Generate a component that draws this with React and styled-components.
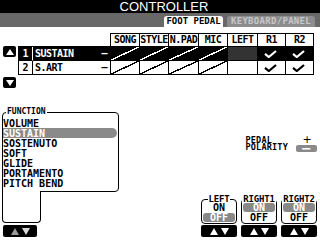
import React from "react";
import styled, { createGlobalStyle } from "styled-components";

const PIX = `"DejaVu Sans Mono", "Liberation Mono", monospace`;

const Global = createGlobalStyle`
  html, body { margin: 0; padding: 0; background: #fff; }
  body { font-family: ${PIX}; color: #000; }
`;

const Screen = styled.div`
  width: 320px;
  height: 240px;
  overflow: hidden;
  background: #fff;
  display: flex;
  flex-direction: column;
`;

const TitleBar = styled.div`
  height: 13px;
  background: #000;
  color: #fff;
  font: 13px/13px "Liberation Sans", Arial, sans-serif;
  text-align: center;
  padding-left: 8px;
`;

const TabBar = styled.div`
  height: 14px;
  background: #686868;
  display: flex;
  align-items: flex-end;
  gap: 4px;
  padding-left: 164px;
`;

const Tab = styled.div`
  width: ${p => p.$w}px;
  height: 11px;
  border-radius: 3px 3px 0 0;
  background: ${p => (p.$active ? "#fff" : "#8c8c8c")};
  color: ${p => (p.$active ? "#000" : "#c8c8c8")};
  font: bold 9px/11px ${PIX};
  letter-spacing: ${p => (p.$active ? 0 : 0.3)}px;
  text-align: center;
  white-space: nowrap;
`;

const TableArea = styled.div`
  display: flex;
  height: 81px;
  box-sizing: border-box;
  padding-top: 6px;
`;

const ArrowCol = styled.div`
  width: 18px;
  box-sizing: border-box;
  padding-left: 3px;
  display: flex;
  flex-direction: column;
`;

const ScrollBtn = styled.div`
  width: 13px;
  height: 11px;
  margin-top: ${p => p.$mt}px;
  background: #000;
  border-radius: 2px;
  display: flex;
  align-items: center;
  justify-content: center;
`;

const Tri = styled.span`
  width: 0;
  height: 0;
  border-left: ${p => p.$w / 2}px solid transparent;
  border-right: ${p => p.$w / 2}px solid transparent;
  ${p =>
    p.$down
      ? `border-top: ${p.$h}px solid ${p.$c};`
      : `border-bottom: ${p.$h}px solid ${p.$c};`}
`;

const PedalGrid = styled.div`
  display: grid;
  grid-template-columns: 15px 78px 29px 29px 30px 29px 30px 28px 28px;
  align-self: flex-start;
`;

const HeadBlank = styled.div`
  box-sizing: border-box;
  height: 14px;
  border-bottom: 1px solid #000;
  border-right: ${p => (p.$edge ? "1px solid #000" : "0")};
`;

const HeadCell = styled.div`
  box-sizing: border-box;
  height: 14px;
  border-top: 1px solid #000;
  border-bottom: 1px solid #000;
  border-right: 1px solid #000;
  font: bold 10px/12px ${PIX};
  letter-spacing: -0.5px;
  text-align: center;
  white-space: nowrap;
  overflow: hidden;
`;

const Cell = styled.div`
  box-sizing: border-box;
  height: 14px;
  border-bottom: 1px solid #000;
  border-right: 1px solid #000;
  background: ${p => (p.$sel ? "#000" : "#fff")};
  color: ${p => (p.$sel ? "#fff" : "#000")};
  font: bold 10px/13px ${PIX};
  display: flex;
  align-items: center;
`;

const NumCell = styled(Cell)`
  border-left: 1px solid #000;
  border-right-color: ${p => (p.$sel ? "#fff" : "#000")};
  justify-content: center;
`;

const NameCell = styled(Cell)`
  justify-content: space-between;
  padding: 0 3px 0 2px;
  letter-spacing: -0.5px;
`;

const DiagCell = styled(Cell)`
  background: ${p => {
    const bg = p.$sel ? "#000" : "#fff";
    const ln = p.$sel ? "#fff" : "#000";
    return `linear-gradient(to bottom right, ${bg} calc(50% - 0.7px), ${ln} calc(50% - 0.7px), ${ln} calc(50% + 0.7px), ${bg} calc(50% + 0.7px))`;
  }};
`;

const EmptyCell = styled(Cell)`
  background: ${p => (p.$sel ? "#333" : "#fff")};
`;

const CheckCell = styled(Cell)`
  justify-content: center;
  padding-right: 2px;
`;

const Check = ({ color }) => (
  <svg width="13" height="8" viewBox="0 0 13 8">
    <path d="M1 3.8 L4.8 7 L12 1" stroke={color} strokeWidth="2.2" fill="none" />
  </svg>
);

const Lower = styled.div`
  flex: 1;
  display: flex;
`;

const LeftCol = styled.div`
  width: 120px;
  box-sizing: border-box;
  padding-left: 2px;
  display: flex;
  flex-direction: column;
`;

const FuncSet = styled.fieldset`
  width: 117px;
  box-sizing: border-box;
  margin: 0;
  padding: 2px 0 3px;
  min-width: 0;
  border: 1px solid #000;
  border-radius: 4px 4px 4px 0;
`;

const FuncLegend = styled.legend`
  margin-left: 3px;
  padding: 0 1px;
  font: bold 8px/8px ${PIX};
`;

const FuncItem = styled.div`
  height: 10px;
  box-sizing: border-box;
  padding-top: 2px;
  margin-right: 1px;
  font: bold 10px/8px ${PIX};
  white-space: nowrap;
  background: ${p => (p.$sel ? "#8a8a8a" : "transparent")};
  color: ${p => (p.$sel ? "#fff" : "#000")};
  border-radius: 0 5px 5px 0;
`;

const FuncTail = styled.div`
  position: relative;
  width: 39px;
  height: 32px;
  box-sizing: border-box;
  margin-top: -1px;
  background: #fff;
  border: 1px solid #000;
  border-top: 0;
  border-radius: 0 0 4px 4px;
`;

const ArrowPair = styled.div`
  width: ${p => p.$w}px;
  height: 12px;
  margin: ${p => p.$mt}px 0 0 ${p => p.$ml || 0}px;
  background: #000;
  border-radius: 2px;
  display: flex;
  align-items: center;
  justify-content: center;
  gap: 3px;
`;

const RightCol = styled.div`
  flex: 1;
  display: flex;
  flex-direction: column;
  align-items: flex-end;
  padding: 0 3px 3px 0;
`;

const Polarity = styled.div`
  margin-top: 28px;
  display: flex;
  gap: 8px;
`;

const PolLabel = styled.div`
  font: bold 8.5px/7px ${PIX};
  letter-spacing: 0.2px;
  padding-top: 1px;
`;

const SignCol = styled.div`
  width: 21px;
  display: flex;
  flex-direction: column;
  align-items: center;
`;

const Plus = styled.div`
  font: 11px/8px "DejaVu Sans", sans-serif;
  padding-left: 1px;
`;

const MinusBtn = styled.div`
  width: 21px;
  height: 7px;
  margin-top: 1px;
  background: #8a8a8a;
  border-radius: 2px;
  color: #fff;
  font: bold 13px/7px "DejaVu Sans", sans-serif;
  text-align: center;
`;

const Toggles = styled.div`
  margin-top: auto;
  display: flex;
  gap: 4px;
`;

const ToggleCol = styled.div`
  width: 36px;
  display: flex;
  flex-direction: column;
`;

const ToggleSet = styled.fieldset`
  margin: 0;
  padding: 0 0 1px;
  min-width: 0;
  border: 1px solid #000;
  border-radius: 4px;
  display: flex;
  flex-direction: column;
  gap: 1px;
`;

const ToggleLegend = styled.legend`
  margin: 0 auto;
  padding: 0 1px;
  font: bold 9px/7px ${PIX};
  letter-spacing: -0.2px;
`;

const Option = styled.div`
  height: 9px;
  margin: 0 1px;
  border-radius: 3px;
  font: bold 10px/9px ${PIX};
  text-align: center;
  background: ${p => (p.$on ? "#888" : "transparent")};
  color: ${p => (p.$on ? "#fff" : "#000")};
`;

const COLS = ["SONG", "STYLE", "N.PAD", "MIC", "LEFT", "R1", "R2"];

const ROWS = [
  { n: 1, name: "SUSTAIN", sel: true },
  { n: 2, name: "S.ART", sel: false },
];

const FUNCS = ["VOLUME", "SUSTAIN", "SOSTENUTO", "SOFT", "GLIDE", "PORTAMENTO", "PITCH BEND"];

const PARTS = [
  { label: "LEFT", on: false },
  { label: "RIGHT1", on: true },
  { label: "RIGHT2", on: true },
];

export default function App() {
  return (
    <>
      <Global />
      <Screen>
        <TitleBar>CONTROLLER</TitleBar>
        <TabBar>
          <Tab $active $w={59}>FOOT PEDAL</Tab>
          <Tab $w={88}>KEYBOARD/PANEL</Tab>
        </TabBar>

        <TableArea>
          <ArrowCol>
            <ScrollBtn $mt={13}>
              <Tri $w={8} $h={6} $c="#fff" />
            </ScrollBtn>
            <ScrollBtn $mt={20}>
              <Tri $down $w={8} $h={6} $c="#fff" />
            </ScrollBtn>
          </ArrowCol>
          <PedalGrid>
            <HeadBlank />
            <HeadBlank $edge />
            {COLS.map(c => (
              <HeadCell key={c}>{c}</HeadCell>
            ))}
            {ROWS.map(r => (
              <React.Fragment key={r.n}>
                <NumCell $sel={r.sel}>{r.n}</NumCell>
                <NameCell $sel={r.sel}>
                  <span>{r.name}</span>
                  <span>–</span>
                </NameCell>
                {[0, 1, 2, 3].map(i => (
                  <DiagCell key={i} $sel={r.sel} />
                ))}
                <EmptyCell $sel={r.sel} />
                <CheckCell $sel={r.sel}>
                  <Check color={r.sel ? "#fff" : "#000"} />
                </CheckCell>
                <CheckCell $sel={r.sel}>
                  <Check color={r.sel ? "#fff" : "#000"} />
                </CheckCell>
              </React.Fragment>
            ))}
          </PedalGrid>
        </TableArea>

        <Lower>
          <LeftCol>
            <FuncSet>
              <FuncLegend>FUNCTION</FuncLegend>
              {FUNCS.map(f => (
                <FuncItem key={f} $sel={f === "SUSTAIN"}>{f}</FuncItem>
              ))}
            </FuncSet>
            <FuncTail />
            <ArrowPair $w={34} $mt={2} $ml={1}>
              <Tri $w={8} $h={7} $c="#9a9a9a" />
              <Tri $down $w={8} $h={7} $c="#d8d8d8" />
            </ArrowPair>
          </LeftCol>

          <RightCol>
            <Polarity>
              <PolLabel>
                PEDAL
                <br />
                POLARITY
              </PolLabel>
              <SignCol>
                <Plus>+</Plus>
                <MinusBtn>−</MinusBtn>
              </SignCol>
            </Polarity>

            <Toggles>
              {PARTS.map(p => (
                <ToggleCol key={p.label}>
                  <ToggleSet>
                    <ToggleLegend>{p.label}</ToggleLegend>
                    <Option $on={p.on}>ON</Option>
                    <Option $on={!p.on}>OFF</Option>
                  </ToggleSet>
                  <ArrowPair $w={36} $mt={1}>
                    <Tri $w={8} $h={7} $c="#fff" />
                    <Tri $down $w={8} $h={7} $c="#fff" />
                  </ArrowPair>
                </ToggleCol>
              ))}
            </Toggles>
          </RightCol>
        </Lower>
      </Screen>
    </>
  );
}
